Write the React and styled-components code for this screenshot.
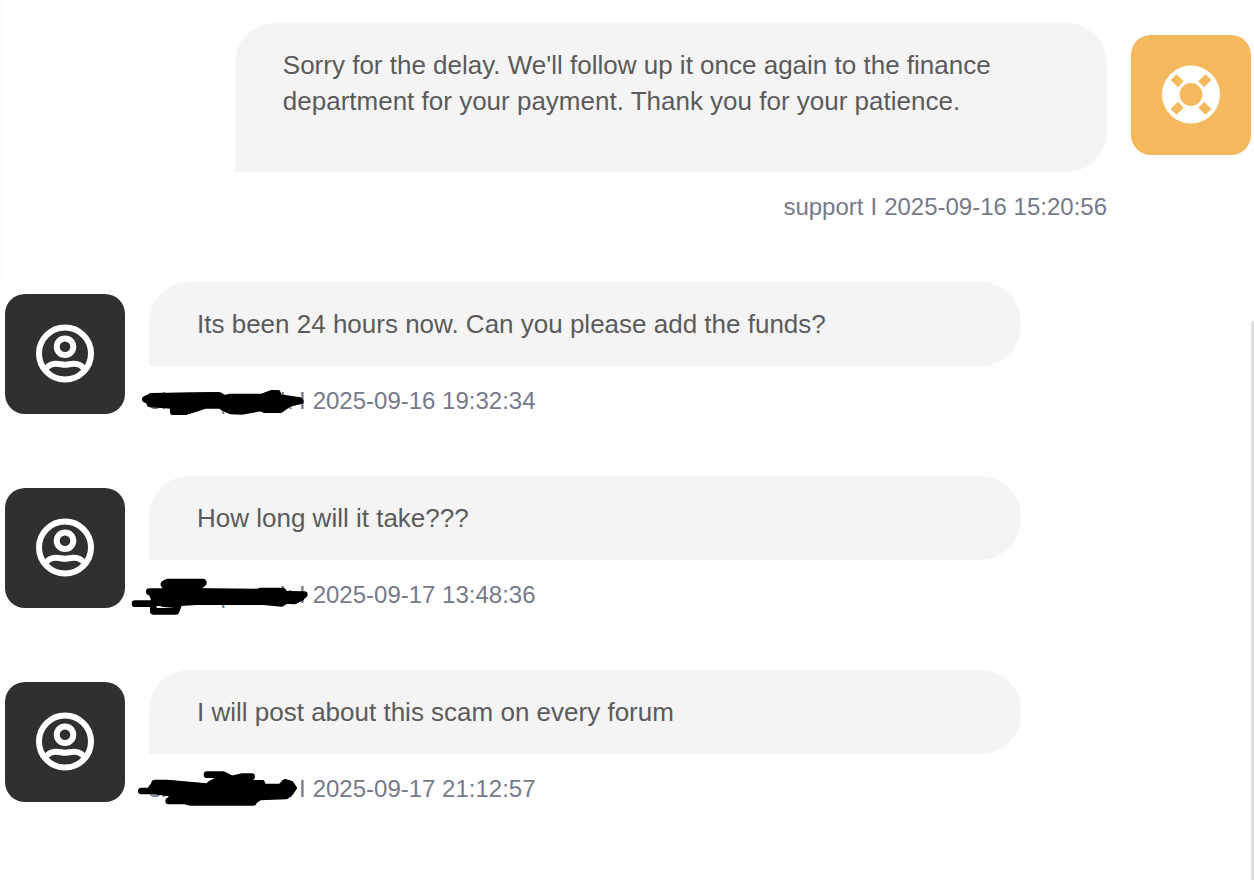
import React from "react";
import styled, { createGlobalStyle } from "styled-components";

const GlobalStyle = createGlobalStyle`
  * {
    box-sizing: border-box;
  }

  body {
    margin: 0;
    background-color: #fefefe;
    font-family: "Liberation Sans", Arial, sans-serif;
  }
`;

const Page = styled.div`
  min-height: 100vh;
  display: flex;
`;

const Edge = styled.div`
  width: 5px;
  height: 280px;
  background-color: #fcfcfc;
`;

const Track = styled.div`
  width: 3px;
  padding-top: 321px;
  display: flex;
`;

const Thumb = styled.div`
  width: 100%;
  border-top-left-radius: 3px;
  background-color: #dfdfdf;
`;

const Messages = styled.ul`
  flex: 1;
  margin: 0;
  padding: 23px 0;
  list-style: none;
  display: flex;
  flex-direction: column;
  gap: 57px;
`;

const Message = styled.li`
  display: flex;
  flex-direction: ${({ $support }) => ($support ? "row-reverse" : "row")};
  align-items: flex-start;
  gap: 24px;
`;

const Avatar = styled.div`
  flex-shrink: 0;
  width: 120px;
  height: 120px;
  margin-top: 12px;
  border-radius: 20px;
  display: flex;
  justify-content: center;
  align-items: center;
  background-color: ${({ $support }) => ($support ? "#f4b95d" : "#303030")};
`;

const Content = styled.div`
  width: 70%;
  display: flex;
  flex-direction: column;
  gap: 17px;
`;

const Bubble = styled.div`
  padding: 24px 48px;
  border-radius: 40px 40px 40px 0;
  background-color: #f4f4f4;
`;

const Text = styled.p`
  margin: 0 0 ${({ $support }) => ($support ? "29px" : "0")};
  color: #5b5b5b;
  font-size: 26px;
  line-height: 36px;
`;

const Meta = styled.div`
  display: flex;
  justify-content: ${({ $support }) => ($support ? "flex-end" : "flex-start")};
  gap: 7px;
  color: #777a89;
  font-size: 24px;
  line-height: 36px;
`;

const HiddenName = styled.span`
  position: relative;
  width: 143px;
  display: flex;
  justify-content: space-between;
`;

const Scribble = styled.svg`
  position: absolute;
  top: -8px;
  left: -19px;
  overflow: visible;
`;

const UserIcon = () => (
  <svg width="60" height="60" viewBox="-30 -29.5 60 60" fill="none" stroke="#fff" strokeWidth="6">
    <circle r="26" />
    <circle cy="-6.8" r="8.3" />
    <path d="M-19.5 15.5C-16.5 11.5 -13 9.9 -8.5 10.2C-5 10.4 -3 11.2 0 11.2C3 11.2 5 10.4 8.5 10.2C13 9.9 16.5 11.5 19.5 15.5" />
  </svg>
);

const LifebuoyIcon = () => (
  <svg width="60" height="60" viewBox="-30 -29.5 60 60">
    <circle r="29" fill="#fff" />
    <g fill="#f4b95d">
      <circle r="11.4" />
      {[45, 135, 225, 315].map(angle => (
        <rect key={angle} x="14.5" y="-4.1" width="10.2" height="8.2" transform={`rotate(${angle})`} />
      ))}
    </g>
  </svg>
);

// Each scribble is a filled blot plus the loose pen strokes around it
const scribbles = [
  {
    blot:
      "M46 73L62 60L268 57L284 66L300 62L396 62L426 51L445 51L450 64L510 73L515 80L478 90L453 108L403 108L392 103L335 113L303 112L278 101L270 95L228 95L165 114L128 113L124 95L62 91Z",
    strokes: "M46 73L64 65L262 62M60 86H120M130 110H165L205 98M408 62L430 56H440M310 105H335L385 96M480 80L510 78",
  },
  {
    blot:
      "M60 70L120 62L385 65L390 62H460L468 72L525 76L515 90L490 100L470 98L455 107L400 102H200L150 105L75 105Z",
    strokes:
      "M112 52Q90 46 115 39H218Q224 41 212 48L180 62H110M110 56H190M15 104H70L100 90M70 104V127H138L145 108L100 104M58 68H120M470 76L523 77L495 95",
  },
  {
    blot:
      "M75 56L110 56L230 67L320 57L398 57L402 68L450 68L465 54L485 60L495 75L485 90L470 103L390 106L372 118L180 118L150 108L115 110L130 95L70 88L60 75Z",
    strokes: "M231 35H280L305 48L335 41H365L345 55L260 53L240 64M290 52H340M34 84H80M74 61H110L210 71M116 114H165L180 118H370M465 60L488 74L475 92",
  },
];

const messages = [
  {
    id: 1,
    support: true,
    text: "Sorry for the delay. We'll follow up it once again to the finance department for your payment. Thank you for your patience.",
    date: "2025-09-16 15:20:56",
  },
  { id: 2, text: "Its been 24 hours now. Can you please add the funds?", date: "2025-09-16 19:32:34", scribble: scribbles[0] },
  { id: 3, text: "How long will it take???", date: "2025-09-17 13:48:36", scribble: scribbles[1] },
  { id: 4, text: "I will post about this scam on every forum", date: "2025-09-17 21:12:57", scribble: scribbles[2] },
];

export default () => (
  <Page>
    <GlobalStyle />
    <Edge />
    <Messages>
      {messages.map(({ id, support, text, date, scribble }) => (
        <Message key={id} $support={support}>
          <Avatar $support={support}>{support ? <LifebuoyIcon /> : <UserIcon />}</Avatar>
          <Content>
            <Bubble>
              <Text $support={support}>{text}</Text>
            </Bubble>
            <Meta $support={support}>
              {support ? (
                <span>support</span>
              ) : (
                <HiddenName>
                  <span>sh</span>
                  <span>p</span>
                  <span>k</span>
                  <Scribble width="200" height="60" viewBox="0 0 600 180" strokeLinecap="round" strokeLinejoin="round">
                    <path d={scribble.blot} stroke="#000" strokeWidth="12" />
                    <path d={scribble.strokes} fill="none" stroke="#000" strokeWidth="20" />
                  </Scribble>
                </HiddenName>
              )}
              <span>I</span>
              <time>{date}</time>
            </Meta>
          </Content>
        </Message>
      ))}
    </Messages>
    <Track>
      <Thumb />
    </Track>
  </Page>
);
